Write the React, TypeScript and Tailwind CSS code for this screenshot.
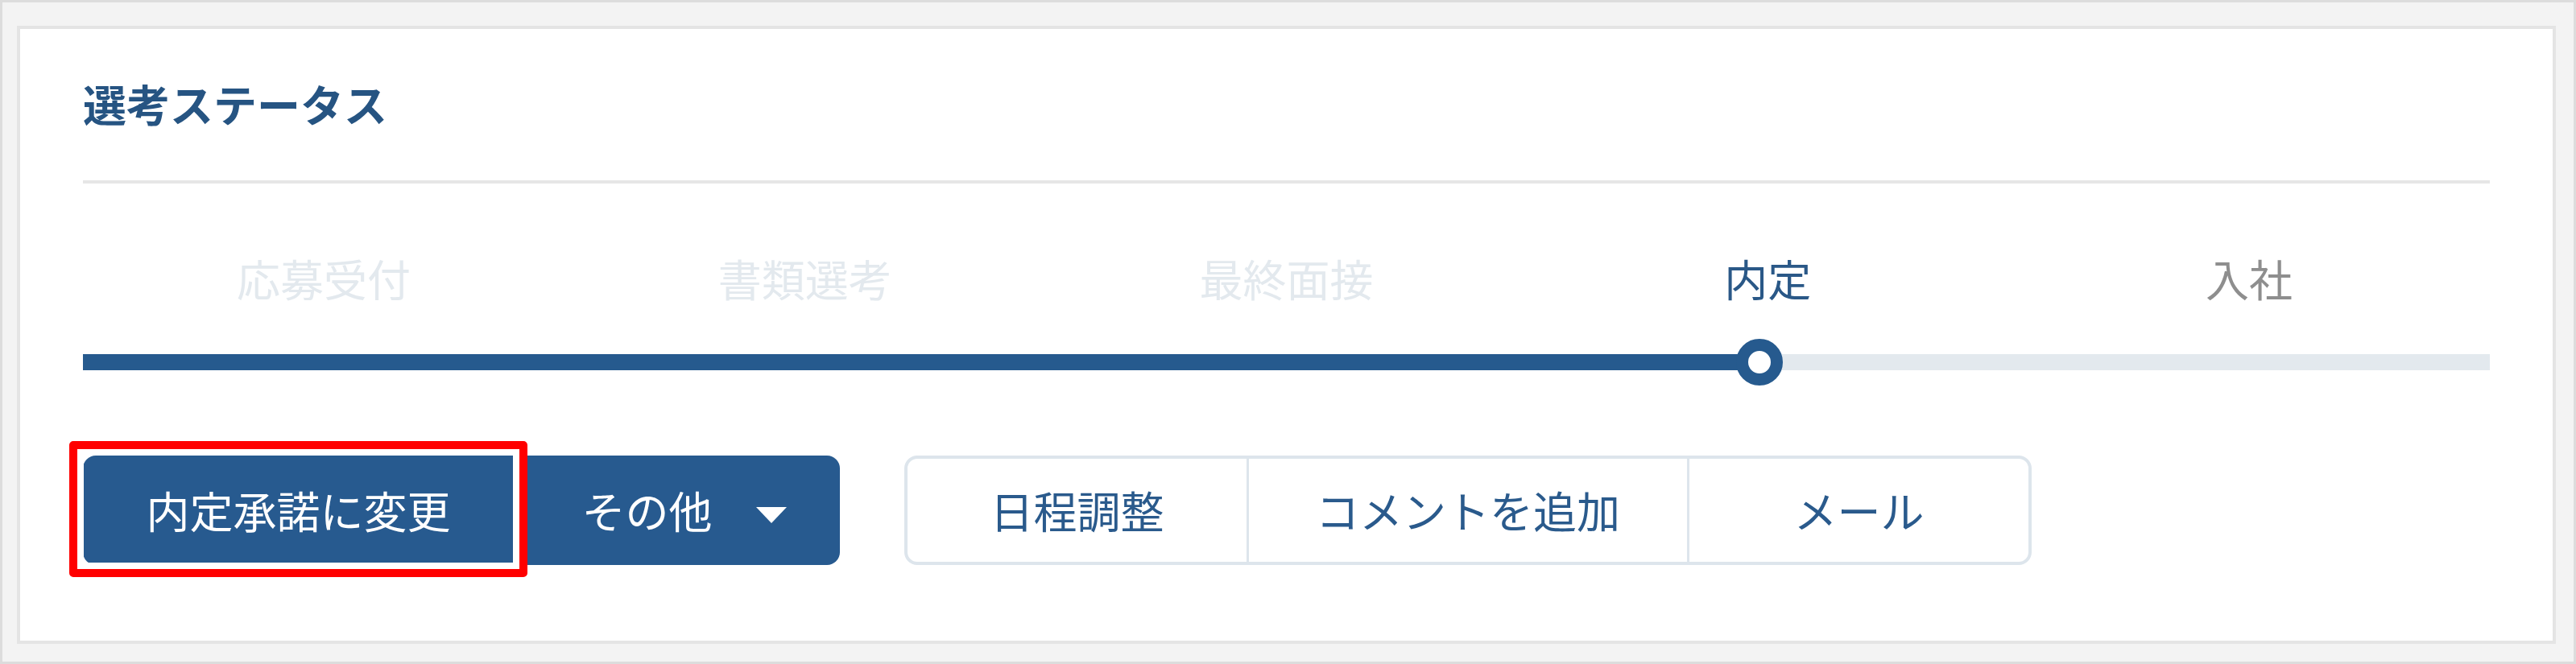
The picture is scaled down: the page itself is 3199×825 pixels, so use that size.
import React from "react";

const stages = [
  { label: "応募受付", cls: "text-[#e3e9ee]" },
  { label: "書類選考", cls: "text-[#e3e9ee]" },
  { label: "最終面接", cls: "text-[#e3e9ee]" },
  { label: "内定", cls: "text-[#2a5887]" },
  { label: "入社", cls: "text-[#8e8e8e]" },
];

export default function App() {
  return (
    <div className="w-[3199px] h-[825px] box-border border-[3px] border-[#dcdcdc] bg-[#f3f3f3] pl-[18px] pt-[29px] pr-[22px] pb-[22px] font-['Noto_Sans_CJK_JP','Noto_Sans',sans-serif]">
      <div className="h-full box-border border-[4px] border-[#e4e4e4] bg-white px-[78px] pt-[66px] flex flex-col">
        <h2 className="text-[54px] leading-none font-bold text-[#265482] h-[54px]">選考ステータス</h2>
        <div className="mt-[68px] h-[4px] bg-[#e6e6e6]" />
        <div className="mt-[91px] grid grid-cols-5">
          {stages.map((s) => (
            <div key={s.label} className={`text-center text-[54px] leading-none h-[54px] ${s.cls}`}>
              {s.label}
            </div>
          ))}
        </div>
        <div className="mt-[47px] h-[60px] relative flex items-center">
          <div className="w-full h-[20px] bg-[#e3e9ee] flex">
            <div className="w-[2082px] h-full bg-[#265a8e]" />
          </div>
          <div className="absolute left-[2053px] top-[1px] w-[58px] h-[58px] rounded-full bg-white border-[15px] border-[#265a8e] box-border" />
        </div>
        <div className="mt-[86px] flex items-center">
          <div className="relative flex">
            <button className="w-[541px] h-[136px] bg-[#275a8f] text-white text-[54px] leading-none rounded-l-[16px] flex items-center justify-center pr-[6px]">
              内定承諾に変更
            </button>
            <button className="w-[399px] h-[136px] bg-[#275a8f] text-white text-[54px] leading-none rounded-r-[16px] flex items-center justify-center pl-[12px]">
              <span>その他</span>
              <svg className="ml-[54px] mt-[12px]" width="38" height="20" viewBox="0 0 38 20">
                <path d="M0 0 L38 0 L19 20 Z" fill="#ffffff" />
              </svg>
            </button>
            <div className="absolute left-[-17px] top-[-18px] w-[569px] h-[169px] border-[10px] border-[#ff0000] rounded-[5px] box-border">
              <div className="w-full h-full border-[8px] border-white box-border" />
            </div>
          </div>
          <div className="ml-[80px] h-[136px] flex border-[4px] border-[#dde5ec] rounded-[16px] box-border text-[#2a5a8c] text-[54px] leading-none">
            <div className="w-[421px] flex items-center justify-center">日程調整</div>
            <div className="w-[547px] flex items-center justify-center border-l-[3px] border-[#dde5ec]">コメントを追加</div>
            <div className="w-[424px] flex items-center justify-center border-l-[3px] border-[#dde5ec]">メール</div>
          </div>
        </div>
      </div>
    </div>
  );
}
